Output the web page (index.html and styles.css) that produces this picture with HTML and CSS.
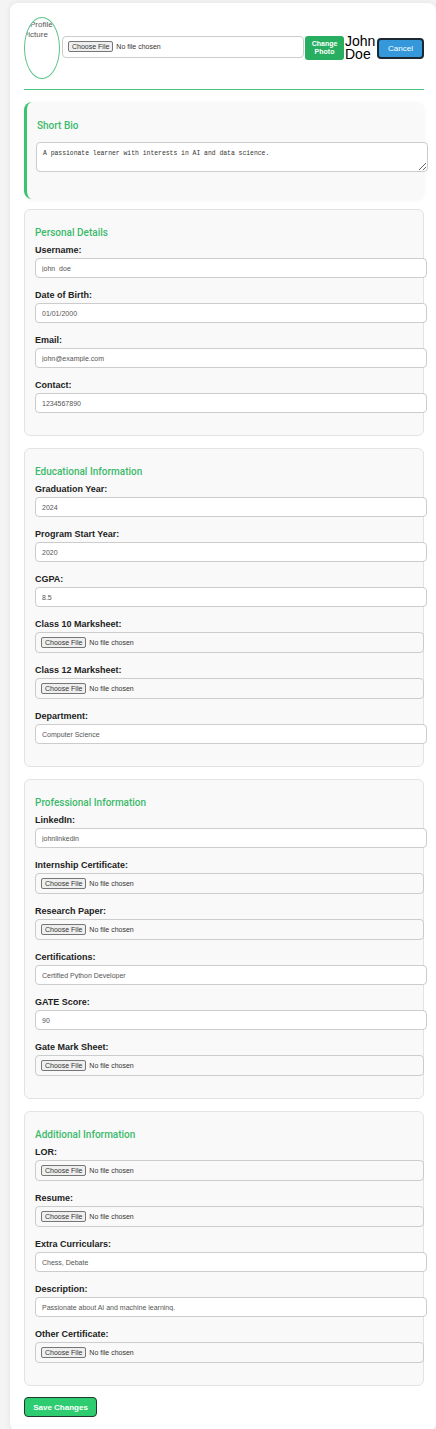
FILE: index.html
```html
<!DOCTYPE html>
<html lang="en">
<head>
<meta charset="utf-8">
<title>Edit Profile</title>
<link rel="stylesheet" href="styles.css">
</head>
<body>
<div class="container">
  <div class="profile-header">
    <div class="avatar"><span class="alt-text">Profile Picture</span></div>
    <input class="photo-input" type="file">
    <button class="btn-photo">Change<br>Photo</button>
    <div class="name">John Doe</div>
    <button class="btn-cancel">Cancel</button>
  </div>
  <div class="divider"></div>

  <div class="bio-card">
    <h3 class="card-title bio-title">Short Bio</h3>
    <textarea class="bio-text">A passionate learner with interests in AI and data science.</textarea>
  </div>

  <div class="card">
    <h3 class="card-title">Personal Details</h3>
    <div class="field"><label>Username:</label><input class="text" type="text" value="john  doe"></div>
    <div class="field"><label>Date of Birth:</label><input class="text" type="text" value="01/01/2000"></div>
    <div class="field"><label>Email:</label><input class="text" type="text" value="john@example.com"></div>
    <div class="field"><label>Contact:</label><input class="text" type="text" value="1234567890"></div>
  </div>

  <div class="card">
    <h3 class="card-title">Educational Information</h3>
    <div class="field"><label>Graduation Year:</label><input class="text" type="text" value="2024"></div>
    <div class="field"><label>Program Start Year:</label><input class="text" type="text" value="2020"></div>
    <div class="field"><label>CGPA:</label><input class="text" type="text" value="8.5"></div>
    <div class="field"><label>Class 10 Marksheet:</label><input class="file" type="file"></div>
    <div class="field"><label>Class 12 Marksheet:</label><input class="file" type="file"></div>
    <div class="field"><label>Department:</label><input class="text" type="text" value="Computer Science"></div>
  </div>

  <div class="card">
    <h3 class="card-title">Professional Information</h3>
    <div class="field"><label>LinkedIn:</label><input class="text" type="text" value="johnlinkedin"></div>
    <div class="field"><label>Internship Certificate:</label><input class="file" type="file"></div>
    <div class="field"><label>Research Paper:</label><input class="file" type="file"></div>
    <div class="field"><label>Certifications:</label><input class="text" type="text" value="Certified Python Developer"></div>
    <div class="field"><label>GATE Score:</label><input class="text" type="text" value="90"></div>
    <div class="field"><label>Gate Mark Sheet:</label><input class="file" type="file"></div>
  </div>

  <div class="card">
    <h3 class="card-title">Additional Information</h3>
    <div class="field"><label>LOR:</label><input class="file" type="file"></div>
    <div class="field"><label>Resume:</label><input class="file" type="file"></div>
    <div class="field"><label>Extra Curriculars:</label><input class="text" type="text" value="Chess, Debate"></div>
    <div class="field"><label>Description:</label><input class="text" type="text" value="Passionate about AI and machine learning."></div>
    <div class="field"><label>Other Certificate:</label><input class="file" type="file"></div>
  </div>

  <button class="btn-save">Save Changes</button>
</div>
</body>
</html>
```
FILE: styles.css
```css
html, body {
  margin: 0;
  padding: 0;
  overflow: hidden;
}
body {
  background: #f4f4f4;
  font-family: "Liberation Sans", Arial, sans-serif;
}
.container {
  margin: 3px 0 0 10px;
  width: 426px;
  box-sizing: border-box;
  padding: 14px 12px 14px 14px;
  background: #ffffff;
  border-radius: 8px;
  box-shadow: 0 0 6px rgba(0, 0, 0, 0.08);
}
.profile-header {
  display: flex;
  align-items: center;
  height: 62px;
}
.avatar {
  flex: none;
  width: 36px;
  height: 62px;
  box-sizing: border-box;
  border: 1px solid #5cc28b;
  border-radius: 50%;
  overflow: hidden;
  margin-right: 2px;
}
.alt-text {
  display: block;
  width: 38px;
  margin-left: -2px;
  padding-top: 2px;
  text-indent: 7px;
  font-size: 8px;
  line-height: 10px;
  color: #555;
}
.photo-input {
  flex: none;
  width: 242px;
  height: 22px;
  box-sizing: border-box;
  padding: 4px 5px 0;
  margin: -3px 1px 0 0;
  border: 1px solid #ccc;
  border-radius: 4px;
  background: #fff;
  font: 7px "Liberation Sans", Arial, sans-serif;
  color: #333;
}
.btn-photo {
  flex: none;
  width: 39px;
  height: 24px;
  margin-right: 1px;
  padding: 0;
  border: none;
  border-radius: 3px;
  background: #27ae60;
  color: #fff;
  font: bold 7px/8px "Liberation Sans", Arial, sans-serif;
}
.name {
  flex: none;
  width: 30px;
  margin-right: 2px;
  font-size: 14px;
  line-height: 13px;
  color: #000;
  margin-top: -1px;
}
.btn-cancel {
  flex: none;
  width: 47px;
  height: 21px;
  padding: 0;
  border: 2px solid #1c2833;
  border-radius: 4px;
  background: #3498db;
  color: #fff;
  font: 8px "Liberation Sans", Arial, sans-serif;
}
.divider {
  height: 1px;
  background: #4cc47e;
  margin: 10px 0 12px;
}
.card-title {
  margin: 6px 0 5px;
  font-family: Roboto, "Liberation Sans", sans-serif;
  font-weight: 500;
  font-size: 10px;
  line-height: 12px;
  color: #3cb96b;
}
.bio-card {
  background: #f9f9f9;
  border-left: 3px solid #3cc372;
  border-radius: 8px;
  padding: 11px 0 11px 9px;
  margin-bottom: 10px;
  box-shadow: 0 1px 4px rgba(0, 0, 0, 0.05);
}
.bio-title {
  margin: 7px 0 10px 1px;
}
.bio-text {
  display: block;
  width: 392px;
  height: 30px;
  box-sizing: border-box;
  margin: 0 0 16px;
  padding: 7px 6px 0;
  border: 1px solid #ccc;
  border-radius: 4px;
  background: #fff;
  font: 6.4px "Liberation Mono", monospace;
  color: #333;
}
.card {
  background: #f9f9f9;
  border: 1px solid #e3e3e3;
  border-radius: 6px;
  padding: 11px 10px 0;
  margin-bottom: 12px;
}
.field {
  margin-bottom: 11px;
}
.card .field:last-child {
  margin-bottom: 22px;
}
.field label {
  display: block;
  font-weight: bold;
  font-size: 9px;
  line-height: 12px;
  color: #222;
  margin-bottom: 2px;
}
.text {
  display: block;
  width: 392px;
  height: 20px;
  box-sizing: border-box;
  padding: 0 6px;
  border: 1px solid #ccc;
  border-radius: 4px;
  background: #fff;
  font: 7px "Liberation Sans", Arial, sans-serif;
  color: #555;
  outline: none;
}
.file {
  display: block;
  width: 389px;
  height: 21px;
  box-sizing: border-box;
  padding: 4px 5px 0;
  border: 1px solid #ccc;
  border-radius: 4px;
  background: #f9f9f9;
  font: 7px "Liberation Sans", Arial, sans-serif;
  color: #333;
}
.file::file-selector-button,
.photo-input::file-selector-button {
  font: 7px "Liberation Sans", Arial, sans-serif;
  padding: 1px 3px;
  margin-right: 3px;
  border: 1px solid #767676;
  border-radius: 2px;
  background: #efefef;
  color: #333;
}
.btn-save {
  display: block;
  width: 73px;
  height: 20px;
  margin-top: -1px;
  padding: 0;
  border: 1px solid #1e3a2a;
  border-radius: 4px;
  background: #2ecc71;
  color: #fff;
  font: bold 8px "Liberation Sans", Arial, sans-serif;
}
```
